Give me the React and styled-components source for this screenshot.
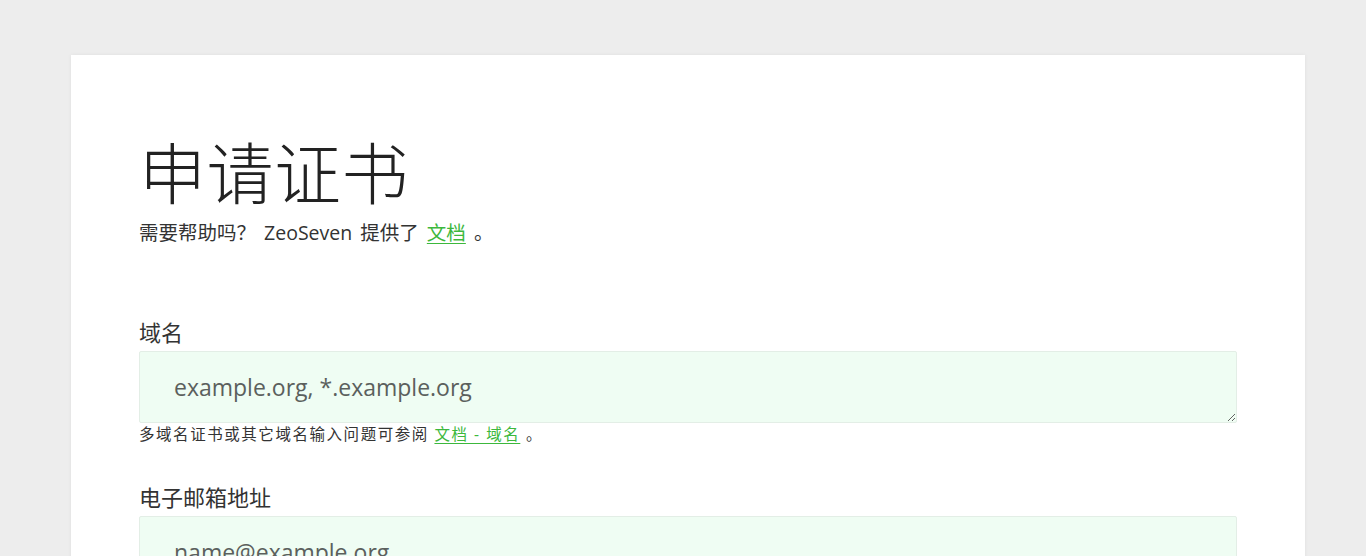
import React from "react";
import styled, { createGlobalStyle } from "styled-components";

const Global = createGlobalStyle`
  html, body { margin: 0; padding: 0; background: #ededed; }
  body { font-family: "Open Sans", "Noto Sans CJK SC", sans-serif; color: #333; }
  * { box-sizing: border-box; }
`;

const Page = styled.div`
  padding: 55px 61px 0 71px;
`;

const Card = styled.main`
  background: #fff;
  box-shadow: 0 0 4px rgba(0, 0, 0, 0.06);
  padding: 77px 68px 40px 68px;
  min-height: 600px;
`;

const Title = styled.h1`
  margin: 0;
  font-family: "Noto Sans CJK SC", sans-serif;
  font-weight: 300;
  font-size: 67px;
  line-height: 76px;
  color: #222;
  letter-spacing: 0.5px;
`;

const Lead = styled.p`
  margin: 11px 0 0;
  font-size: 19.5px;
  line-height: 28px;
  color: #333;
  word-spacing: 3px;
`;

const Link = styled.a`
  color: #3cb83c;
  text-decoration: underline;
  text-underline-offset: 3px;
`;

const Field = styled.div`
  display: flex;
  flex-direction: column;
  margin-top: ${(p) => p.$top}px;
`;

const Label = styled.label`
  font-size: 22px;
  line-height: 28px;
  color: #333;
  margin-bottom: 5px;
`;

const controlCss = `
  width: 100%;
  background: #effdf3;
  border: 1px solid #e3eee6;
  border-radius: 2px;
  font-family: "Open Sans", "Noto Sans CJK SC", sans-serif;
  font-size: 23px;
  color: #555b58;
  padding: 19px 34px;
  outline: none;
  &::placeholder { color: #5b605d; opacity: 1; }
`;

const TextArea = styled.textarea`
  ${controlCss}
  display: block;
  height: 72px;
  line-height: 32px;
  resize: vertical;
`;

const Input = styled.input`
  ${controlCss}
  height: 72px;
  line-height: 32px;
`;

const Help = styled.p`
  margin: 1px 0 0;
  font-size: 15.5px;
  line-height: 20px;
  color: #333;
  letter-spacing: 1.55px;
`;

export default function App() {
  return (
    <>
      <Global />
      <Page>
        <Card>
          <Title>申请证书</Title>
          <Lead>
            需要帮助吗？ ZeoSeven 提供了 <Link href="#">文档</Link> 。
          </Lead>
          <Field $top={71}>
            <Label>域名</Label>
            <TextArea placeholder="example.org, *.example.org" />
            <Help>
              多域名证书或其它域名输入问题可参阅 <Link href="#">文档 - 域名</Link> 。
            </Help>
          </Field>
          <Field $top={39}>
            <Label>电子邮箱地址</Label>
            <Input placeholder="name@example.org" />
          </Field>
        </Card>
      </Page>
    </>
  );
}
